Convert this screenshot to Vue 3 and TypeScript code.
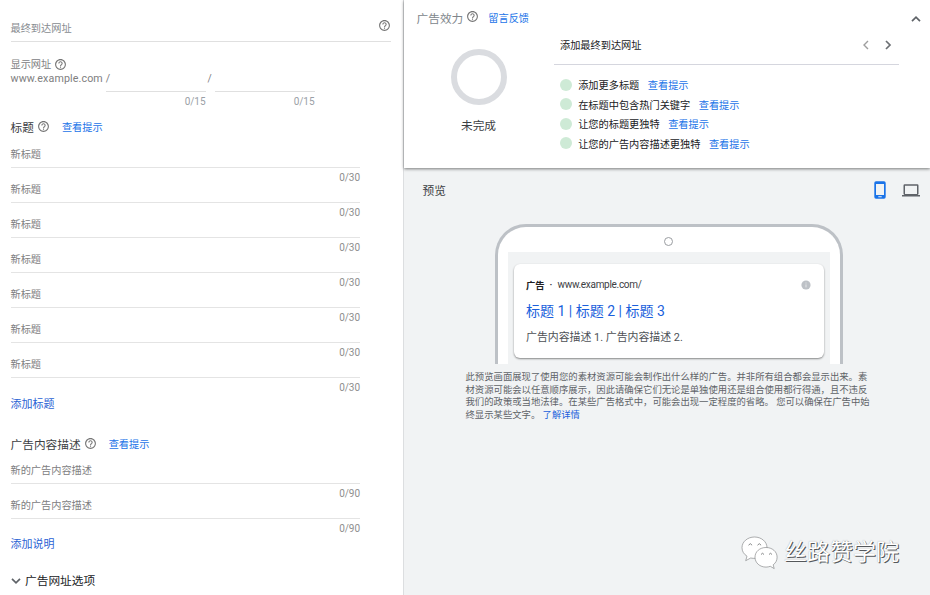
<script setup lang="ts">
import { defineComponent, h } from 'vue'

interface Suggestion {
  text: string
}

const headlines: string[] = Array.from({ length: 7 }, () => '新标题')
const descriptions: string[] = Array.from({ length: 2 }, () => '新的广告内容描述')
const suggestions: Suggestion[] = [
  { text: '添加更多标题' },
  { text: '在标题中包含热门关键字' },
  { text: '让您的标题更独特' },
  { text: '让您的广告内容描述更独特' },
]
const disclaimer: string[] = [
  '此预览画面展现了使用您的素材资源可能会制作出什么样的广告。并非所有组合都会显示出来。素',
  '材资源可能会以任意顺序展示，因此请确保它们无论是单独使用还是组合使用都行得通，且不违反',
  '我们的政策或当地法律。在某些广告格式中，可能会出现一定程度的省略。 您可以确保在广告中始',
]

const HelpIcon = defineComponent({
  render: () =>
    h('svg', { viewBox: '0 0 24 24', width: 13, height: 13, fill: '#757575' }, [
      h('path', {
        d: 'M11 18h2v-2h-2v2zm1-16C6.48 2 2 6.48 2 12s4.48 10 10 10 10-4.48 10-10S17.52 2 12 2zm0 18c-4.41 0-8-3.59-8-8s3.59-8 8-8 8 3.59 8 8-3.59 8-8 8zm0-14c-2.21 0-4 1.79-4 4h2c0-1.1.9-2 2-2s2 .9 2 2c0 2-3 1.75-3 5h2c0-2.25 3-2.5 3-5 0-2.21-1.79-4-4-4z',
      }),
    ]),
})
</script>

<template>
  <div class="page">
    <section class="form">
      <div class="final-url">
        <span class="placeholder">最终到达网址</span>
        <HelpIcon class="url-help" />
      </div>
      <div class="label-row">
        <span>显示网址</span>
        <HelpIcon />
      </div>
      <div class="path-row">
        <span class="domain">www.example.com /</span>
        <div class="path-field"><div class="path-input"></div><span>0/15</span></div>
        <span class="slash">/</span>
        <div class="path-field"><div class="path-input"></div><span>0/15</span></div>
      </div>

      <div class="section-title titles">
        <span>标题</span>
        <HelpIcon />
        <a>查看提示</a>
      </div>
      <div v-for="(label, i) in headlines" :key="'h' + i" class="field">
        <div class="field-input">{{ label }}</div>
        <div class="count">0/30</div>
      </div>
      <div class="add">添加标题</div>

      <div class="section-title descs">
        <span>广告内容描述</span>
        <HelpIcon />
        <a>查看提示</a>
      </div>
      <div v-for="(label, i) in descriptions" :key="'d' + i" class="field">
        <div class="field-input">{{ label }}</div>
        <div class="count">0/90</div>
      </div>
      <div class="add add-desc">添加说明</div>

      <div class="url-options">
        <svg width="10" height="8" viewBox="0 0 10 8"><path d="M1 1.8 5 5.8 9 1.8" fill="none" stroke="#5f6368" stroke-width="1.7" /></svg>
        <span>广告网址选项</span>
      </div>
    </section>

    <section class="side">
      <div class="strength">
        <div class="score">
          <div class="score-head">
            <span>广告效力</span>
            <HelpIcon class="score-help" />
            <a>留言反馈</a>
          </div>
          <div class="ring"></div>
          <div class="status">未完成</div>
        </div>
        <div class="tips">
          <div class="tip-head">
            <span>添加最终到达网址</span>
            <svg class="prev" width="8" height="12" viewBox="0 0 8 12"><path d="M6 2 2 6l4 4" fill="none" stroke="#9e9e9e" stroke-width="1.4" /></svg>
            <svg width="8" height="12" viewBox="0 0 8 12"><path d="M2 2l4 4-4 4" fill="none" stroke="#6b6f73" stroke-width="1.7" /></svg>
          </div>
          <ul>
            <li v-for="s in suggestions" :key="s.text">
              <i></i><span>{{ s.text }}</span><a>查看提示</a>
            </li>
          </ul>
        </div>
        <svg class="collapse" width="10" height="8" viewBox="0 0 10 8"><path d="M1 6.2 5 2.2 9 6.2" fill="none" stroke="#5f6368" stroke-width="1.7" /></svg>
      </div>

      <div class="preview">
        <div class="preview-head">
          <span>预览</span>
          <svg class="mobile" width="12" height="18" viewBox="0 0 12 18"><path fill="#1a73e8" fill-rule="evenodd" d="M2 .3h8a1.7 1.7 0 0 1 1.7 1.7v14a1.7 1.7 0 0 1-1.7 1.7H2A1.7 1.7 0 0 1 .3 16V2A1.7 1.7 0 0 1 2 .3ZM2 3v11h8V3ZM4.3 15.3v.9h3.4v-.9Z" /></svg>
          <svg class="laptop" width="18" height="13" viewBox="0 0 18 13"><path fill="#5f6368" fill-rule="evenodd" d="M2.7.2h12.6a1.2 1.2 0 0 1 1.2 1.2v8.4a1.2 1.2 0 0 1-1 1.2H18v1.5H0V11h2.5a1.2 1.2 0 0 1-1-1.2V1.4A1.2 1.2 0 0 1 2.7.2ZM3 1.8v8.2h12V1.8Z" /></svg>
        </div>
        <div class="phone">
          <div class="camera"></div>
          <div class="screen">
            <div class="ad">
              <div class="ad-url">
                <b>广告</b><span class="dot">·</span><span class="ad-domain">www.example.com/</span>
                <svg width="10" height="10" viewBox="0 0 10 10"><circle cx="5" cy="5" r="4.6" fill="#bdc1c6" /><path d="M5 4.4v3M5 2.5v1" stroke="#e4e6e8" /></svg>
              </div>
              <div class="ad-title">标题 1 | 标题 2 | 标题 3</div>
              <div class="ad-desc">广告内容描述 1. 广告内容描述 2.</div>
            </div>
          </div>
        </div>
        <div class="note">
          <div v-for="line in disclaimer" :key="line">{{ line }}</div>
          <div>终显示某些文字。 <a>了解详情</a></div>
        </div>
        <div class="brand">
          <svg width="37" height="34" viewBox="0 0 37 34" fill="#fff" stroke="#77797b" stroke-width=".6">
            <path d="M13.5 1C6.600 1 1 5.700 1 11.700c0 3.600 1.900 6.500 5 8.500L4.700 24.700l5-2.700c6.500 1.600 16.300-2.200 16.300-10.300C26 5.700 20.400 1 13.500 1Z" />
            <path d="M25 11.500c-6.200 0-11 4.100-11 9.700s4.800 9.900 11 9.900c1.600 0 3-.3 4.300-.8l3.900 2.300-1-3.800c2.500-1.800 3.900-4.500 3.900-7.600 0-5.600-4.900-9.700-11.100-9.700Z" />
            <path d="M7.500 9.200q1.800-3 3.600 0M16.500 9.200q1.800-3 3.600 0M20 18.500q1.500-2.500 3 0M28 18.500q1.500-2.500 3 0" fill="none" stroke-width=".9" />
          </svg>
          <span>丝路赞学院</span>
        </div>
      </div>
    </section>
  </div>
</template>

<style>
body {
  margin: 0;
  background: #fff;
  overflow: hidden;
}
</style>

<style scoped>
.page {
  display: flex;
  width: 930px;
  height: 595px;
  overflow: hidden;
  font-family: Roboto, "Noto Sans CJK SC", sans-serif;
  font-size: 10.2px;
  color: #80807f;
  white-space: nowrap;
}
svg {
  display: block;
  flex: none;
}
a {
  color: #1a73e8;
}
.form {
  box-sizing: border-box;
  width: 403px;
  padding-left: 10.5px;
  flex: none;
}
.final-url {
  display: flex;
  box-sizing: border-box;
  width: 380.5px;
  height: 42px;
  padding-top: 20px;
  justify-content: space-between;
  line-height: 18px;
  border-bottom: 1px solid #e0e0e0;
}
.placeholder {
  color: #878b90;
}
.url-help {
  margin-top: -1px;
}
.label-row {
  display: flex;
  align-items: center;
  gap: 3px;
  height: 14px;
  margin-top: 15px;
  line-height: 14px;
}
.label-row span {
  padding-top: 2px;
}
.path-row {
  display: flex;
  height: 36px;
  line-height: 15px;
}
.domain {
  width: 95.5px;
  font-size: 10.7px;
  letter-spacing: 0.12px;
}
.path-field {
  width: 99.5px;
  text-align: right;
  font-size: 10px;
  letter-spacing: -0.05px;
  color: #9aa0a6;
  line-height: 19px;
}
.path-input {
  height: 20px;
  border-bottom: 1px solid #e0e0e0;
}
.slash {
  width: 9.5px;
  padding-left: 2px;
  box-sizing: border-box;
}
.section-title {
  display: flex;
  align-items: center;
  height: 18px;
  font-size: 11.7px;
  line-height: 18px;
  color: #3c4043;
}
.section-title svg {
  margin: -3px 0 0 3px;
}
.section-title a {
  margin-left: 12px;
  font-size: 10.2px;
}
.titles {
  margin-top: 12px;
}
.descs {
  height: 17px;
  margin-top: 22px;
}
.field {
  width: 349.5px;
  height: 35px;
}
.field-input {
  box-sizing: border-box;
  height: 31px;
  padding-top: 9px;
  line-height: 17px;
  border-bottom: 1px solid #e4e4e4;
}
.count {
  height: 19px;
  line-height: 19px;
  text-align: right;
  font-size: 10px;
  letter-spacing: -0.05px;
  color: #8e8e8e;
}
.add {
  margin-top: 14px;
  height: 18px;
  line-height: 18px;
  font-size: 11px;
  color: #2a62d4;
}
.add-desc {
  margin-top: 13px;
}
.url-options {
  display: flex;
  align-items: center;
  gap: 4.5px;
  height: 18px;
  margin: 17.5px 0 0;
  line-height: 18px;
  font-size: 11.7px;
  color: #202124;
}
.side {
  display: flex;
  flex-direction: column;
  flex: 1;
  min-width: 0;
  border-left: 1px solid #dcdee0;
}
.strength {
  position: relative;
  display: flex;
  height: 168px;
  background: #fff;
  box-shadow: 0 1px 3px rgba(0, 0, 0, 0.5);
}
.score {
  width: 150px;
}
.score-head {
  display: flex;
  height: 18px;
  margin: 10px 0 0 12.5px;
  line-height: 18px;
  font-size: 11.7px;
  color: #80868b;
}
.score-help {
  margin: 0 0 0 3px;
}
.score-head a {
  margin-left: 9px;
  font-size: 10.2px;
}
.ring {
  box-sizing: border-box;
  width: 56px;
  height: 56px;
  margin: 21px 0 0 47px;
  border: 6px solid #dadce0;
  border-radius: 50%;
}
.status {
  width: 149px;
  margin-top: 12px;
  line-height: 18px;
  text-align: center;
  font-size: 11.7px;
  color: #3c4043;
}
.tips {
  width: 345px;
  color: #202124;
}
.tip-head {
  display: flex;
  align-items: center;
  box-sizing: border-box;
  height: 65px;
  padding: 25px 7px 0 6px;
  border-bottom: 1px solid #d5d6de;
}
.prev {
  margin: 0 14px 0 auto;
}
ul {
  margin: 10px 0 0;
  padding: 0 0 0 6px;
  list-style: none;
}
li {
  display: flex;
  align-items: center;
  height: 19.5px;
}
li i {
  width: 12px;
  height: 12px;
  margin-right: 6.2px;
  border-radius: 50%;
  background: #ceead6;
}
li a {
  margin-left: 8.5px;
}
.collapse {
  margin: 15px 0 0 12px;
}
.preview {
  display: flex;
  flex: 1;
  flex-direction: column;
  background: #f1f3f4;
}
.preview-head {
  display: flex;
  align-items: center;
  height: 44px;
  padding: 0 10px 0 18.5px;
  font-size: 11.7px;
  color: #3c4043;
}
.preview-head span {
  padding-bottom: 2px;
}
.mobile {
  margin: 0 16px 0 auto;
}
.phone {
  display: flex;
  flex-direction: column;
  box-sizing: border-box;
  width: 348px;
  height: 140px;
  margin: 12px 0 0 91px;
  padding: 0 10px;
  border: 3px solid #bdc1c6;
  border-bottom: 0;
  border-radius: 31px 31px 0 0;
  background: #fff;
}
.camera {
  box-sizing: border-box;
  width: 9px;
  height: 9px;
  margin: 10px 0 6px 156px;
  border: 1px solid #9a9da1;
  border-radius: 50%;
}
.screen {
  flex: 1;
  padding: 12px 6px 0;
  background: #f1f3f4;
}
.ad {
  box-sizing: border-box;
  height: 94px;
  padding: 12px 13px 0 12px;
  border-radius: 6px;
  background: #fff;
  box-shadow: 0 1px 2px rgba(0, 0, 0, 0.45);
}
.ad-url {
  display: flex;
  align-items: center;
  height: 17px;
  font-size: 9.45px;
  color: #3c4043;
}
.ad-url b {
  font-size: 9.3px;
  color: #202124;
}
.ad-domain {
  font-size: 10px;
  letter-spacing: -0.3px;
}
.dot {
  margin: 0 5px;
  font-weight: bold;
}
.ad-url svg {
  margin-left: auto;
}
.ad-title {
  height: 24px;
  margin-top: 6px;
  line-height: 24px;
  font-size: 14px;
  color: #1a5fdc;
}
.ad-desc {
  height: 18px;
  margin-top: 6px;
  line-height: 18px;
  font-size: 10.9px;
  color: #4d5156;
}
.note {
  margin: 7px 0 0 61.5px;
  font-size: 9.36px;
  line-height: 12.5px;
  color: #5f6368;
}
.note a {
  color: #1a5fdc;
}
.brand {
  display: flex;
  align-items: center;
  margin: auto 31px 24px auto;
  font-size: 23px;
  line-height: 36px;
  color: #fff;
  text-shadow: 1px 1px 0 #55585b, 0 0 1px #999;
}
.brand svg {
  margin-right: 6px;
}
</style>
